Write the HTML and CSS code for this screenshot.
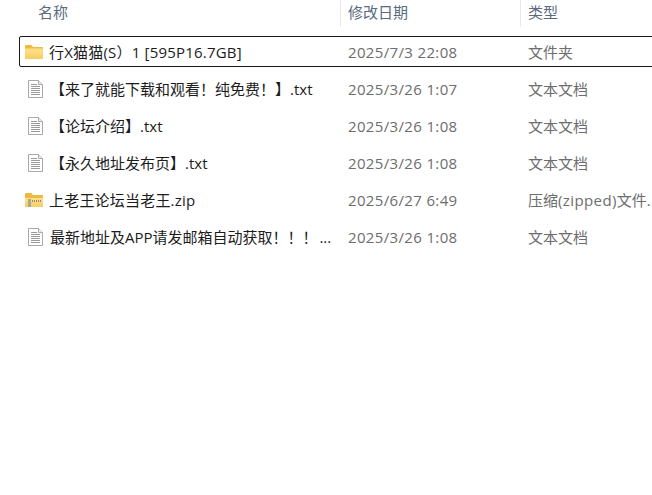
FILE: index.html
```html
<!DOCTYPE html>
<html lang="zh-CN">
<head>
<meta charset="utf-8">
<title>文件列表</title>
<link rel="stylesheet" href="styles.css">
</head>
<body>
<svg class="defs" width="0" height="0" aria-hidden="true">
  <defs>
    <linearGradient id="fold" x1="0" y1="0" x2="0" y2="1">
      <stop offset="0" stop-color="#fde28c"/>
      <stop offset="1" stop-color="#f7cd62"/>
    </linearGradient>
  </defs>
  <symbol id="doc" viewBox="0 0 15 18">
    <path d="M.5.5h10l4 4v13H.5z" fill="#fff" stroke="#a9a9a9"/>
    <path d="M10.5.5v4h4" fill="#eee" stroke="#a9a9a9"/>
    <path d="M3 4.5h6M3 6.5h9M3 8.5h9M3 10.5h9M3 12.5h9M3 14.5h9" stroke="#9a9a9a" fill="none"/>
  </symbol>
  <symbol id="folder" viewBox="0 0 18 14">
    <path d="M0 1.2Q0 0 1.2 0h5L8 2h9q1 0 1 1v10q0 1-1 1H1q-1 0-1-1z" fill="#efb93f"/>
    <path d="M0 3.6h18V13q0 1-1 1H1q-1 0-1-1z" fill="url(#fold)"/>
  </symbol>
  <symbol id="zip" viewBox="0 0 18 14">
    <path d="M0 1.2Q0 0 1.2 0h5L8 2h9q1 0 1 1v10q0 1-1 1H1q-1 0-1-1z" fill="#efb93f"/>
    <path d="M0 5h18v8q0 1-1 1H1q-1 0-1-1z" fill="url(#fold)"/>
    <path d="M3 8h13" stroke="#8d8d78" stroke-dasharray="1 1" stroke-width="2" fill="none"/>
    <path d="M3 6h3v8H3z" fill="#a9a996"/>
  </symbol>
</svg>
<main class="list">
  <header class="head">
    <div class="cell name-h">名称<span class="sort"></span></div>
    <div class="cell date-h">修改日期</div>
    <div class="cell type-h">类型</div>
  </header>
  <div class="rows">
    <div class="row selected">
      <div class="name"><svg class="ico"><use href="#folder"/></svg><span class="wide">行X猫猫(S）1 [595P16.7GB]</span></div>
      <div class="date">2025/7/3 22:08</div>
      <div class="type">文件夹</div>
    </div>
    <div class="row">
      <div class="name"><svg class="ico doc"><use href="#doc"/></svg><span>【来了就能下载和观看！纯免费！】.txt</span></div>
      <div class="date">2025/3/26 1:07</div>
      <div class="type">文本文档</div>
    </div>
    <div class="row">
      <div class="name"><svg class="ico doc"><use href="#doc"/></svg><span>【论坛介绍】.txt</span></div>
      <div class="date">2025/3/26 1:08</div>
      <div class="type">文本文档</div>
    </div>
    <div class="row">
      <div class="name"><svg class="ico doc"><use href="#doc"/></svg><span>【永久地址发布页】.txt</span></div>
      <div class="date">2025/3/26 1:08</div>
      <div class="type">文本文档</div>
    </div>
    <div class="row">
      <div class="name"><svg class="ico"><use href="#zip"/></svg><span class="wide">上老王论坛当老王.zip</span></div>
      <div class="date">2025/6/27 6:49</div>
      <div class="type">压缩<span class="lat">(zipped)</span>文件...</div>
    </div>
    <div class="row">
      <div class="name"><svg class="ico doc"><use href="#doc"/></svg><span class="tight">最新地址及APP请发邮箱自动获取！！！ ...</span></div>
      <div class="date">2025/3/26 1:08</div>
      <div class="type">文本文档</div>
    </div>
  </div>
</main>
</body>
</html>
```
FILE: styles.css
```css
html, body { margin: 0; height: 100%; background: #fff; overflow: hidden; }
body { font-family: "Open Sans", "Noto Sans CJK SC", sans-serif; font-size: 15px; color: #1c1c1c; }
.defs { position: absolute; }
.list { width: 652px; overflow: hidden; }
.head { display: grid; grid-template-columns: 340px 180px 132px; height: 27px; color: #5b6b7e; }
.cell { position: relative; line-height: 25px; padding-left: 7px; border-left: 1px solid #e8e8e8; }
.name-h { padding-left: 38px; border-left: 0; }
.sort { position: absolute; left: 183px; top: -4px; width: 5px; height: 5px; border-left: 1px solid #a0a0a0; border-top: 1px solid #a0a0a0; transform: rotate(45deg); }
.rows { display: flex; flex-direction: column; padding: 9px 0 0 19px; gap: 6px; }
.row { display: grid; grid-template-columns: 321px 180px 140px; width: 641px; height: 31px; align-items: center; box-sizing: border-box; border: 1px solid transparent; }
.selected { border: 1px solid #1a1a1a; border-radius: 2px; }
.name { display: flex; align-items: center; padding-left: 5px; white-space: nowrap; }
.name .wide { letter-spacing: .2px; }
.name .tight { word-spacing: -2px; }
.ico { width: 18px; height: 14px; margin-right: 6px; flex: none; }
.ico.doc { width: 15px; height: 18px; margin: 0 7px 0 3px; }
.date, .type { color: #6d6d6d; padding-left: 7px; white-space: nowrap; }
.date { letter-spacing: .35px; }
.lat { letter-spacing: .4px; }
```
